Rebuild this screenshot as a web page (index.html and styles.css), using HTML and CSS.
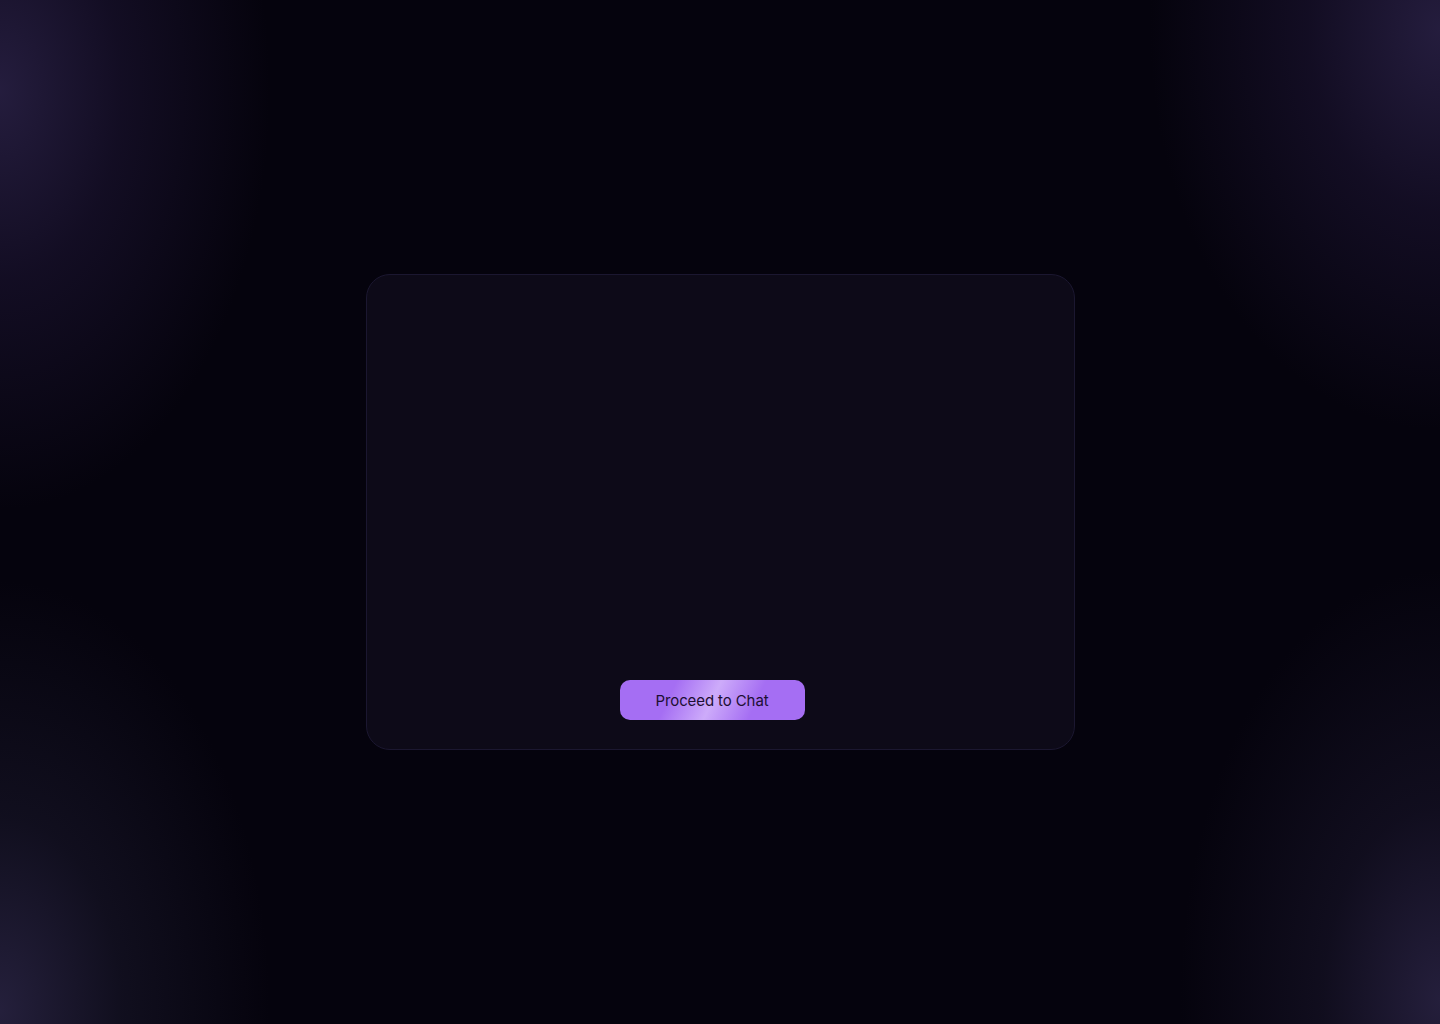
FILE: index.html
```html
<!DOCTYPE html>
<html lang="en">
<head>
<meta charset="utf-8">
<title>Proceed to Chat</title>
<link rel="stylesheet" href="styles.css">
</head>
<body>
<main class="page">
  <section class="card">
    <div class="card-body"></div>
    <div class="card-actions">
      <button class="btn-primary" type="button">Proceed to Chat</button>
    </div>
  </section>
</main>
</body>
</html>
```
FILE: styles.css
```css
html, body {
  margin: 0;
  padding: 0;
  height: 100%;
}
body {
  background-color: #05030d;
  background-image:
    radial-gradient(ellipse 270px 420px at 0px 90px, rgba(38, 30, 64, 0.95) 0%, rgba(28, 20, 50, 0.6) 45%, rgba(5, 3, 13, 0) 100%),
    radial-gradient(ellipse 290px 400px at 1440px 30px, rgba(38, 30, 64, 0.95) 0%, rgba(28, 20, 50, 0.6) 45%, rgba(5, 3, 13, 0) 100%),
    radial-gradient(ellipse 270px 430px at 0px 1010px, rgba(38, 33, 62, 0.95) 0%, rgba(26, 24, 44, 0.55) 45%, rgba(5, 3, 13, 0) 100%),
    radial-gradient(ellipse 260px 430px at 1440px 1000px, rgba(38, 32, 62, 0.95) 0%, rgba(26, 22, 44, 0.55) 45%, rgba(5, 3, 13, 0) 100%);
  font-family: Inter, "Noto Sans", sans-serif;
}
.page {
  height: 100vh;
  display: flex;
  align-items: center;
  justify-content: center;
}
.card {
  box-sizing: border-box;
  width: 709px;
  height: 476px;
  border: 1px solid #1b1730;
  border-radius: 24px;
  background: #0d0a18;
  display: flex;
  flex-direction: column;
  padding: 0 16px 29px 0;
}
.card-body {
  flex: 1;
}
.card-actions {
  display: flex;
  justify-content: center;
}
.btn-primary {
  width: 185px;
  height: 40px;
  border: none;
  border-radius: 10px;
  background:
    linear-gradient(115deg, rgba(255,255,255,0) 28%, rgba(232, 212, 255, 0.6) 50%, rgba(255,255,255,0) 72%),
    #a56ef3;
  color: #1d0f33;
  font-family: Inter, "Noto Sans", sans-serif;
  font-size: 15px;
  font-weight: 400;
  letter-spacing: -0.1px;
  cursor: pointer;
}
```
